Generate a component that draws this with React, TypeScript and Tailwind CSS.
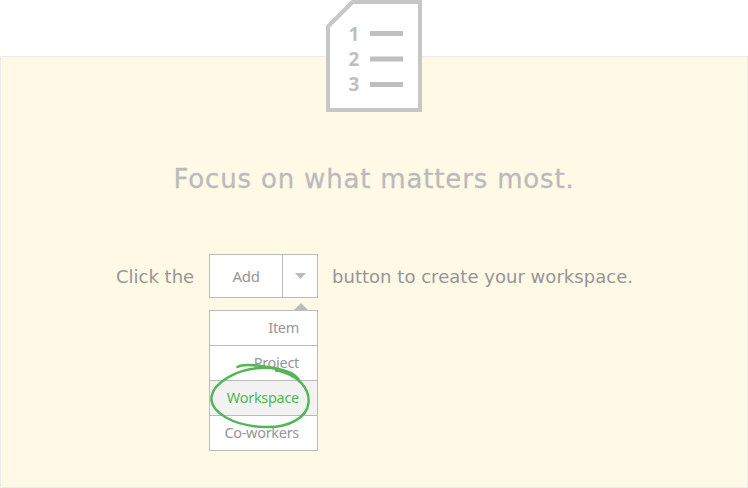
const menuItems = ["Item", "Project", "Workspace", "Co-workers"];

function ListIcon() {
  return (
    <svg width="96" height="112" viewBox="0 0 96 112" className="relative -mt-[57px] block shrink-0">
      <path d="M2 26.5 L26.5 2 H94 V110 H2 Z" fill="#ffffff" stroke="#c7c7c7" strokeWidth="4" />
      <g fill="#bfbfbf">
        <rect x="44" y="31" width="33" height="5" />
        <rect x="44" y="56.5" width="33" height="5" />
        <rect x="44" y="82" width="33" height="5" />
      </g>
      <g className="font-['Open_Sans',sans-serif] text-[19px] font-bold" fill="#bfbfbf">
        <text x="22.5" y="40.5">1</text>
        <text x="22.5" y="65.5">2</text>
        <text x="22.5" y="91">3</text>
      </g>
    </svg>
  );
}

function HandDrawnCircle() {
  return (
    <svg
      width="110"
      height="80"
      viewBox="205 355 110 80"
      className="pointer-events-none absolute -left-[4px] top-[101px]"
      fill="none"
      stroke="#53b655"
      strokeLinecap="round"
    >
      <path d="M237.5 367 C241 364.5 250 364.5 261 366 C277 368 297 372 299 381" strokeWidth="2.6" />
      <path
        d="M292 373.5 C282 369 270 367.5 260 368 C237 369 213 383 211.5 397 C210 412 233 426 264 427 C290 428 307 417 308.5 403 C310 389 299 375 276 370"
        strokeWidth="2.4"
      />
    </svg>
  );
}

export default function App() {
  return (
    <div className="flex h-[488px] w-[748px] flex-col bg-white pt-14 font-['DejaVu_Sans',Verdana,sans-serif]">
      <main className="flex h-[432px] flex-col items-center border border-[#ececec] bg-[#fff9e6]">
        <ListIcon />
        <h1 className="mt-[48px] whitespace-nowrap text-[26px] leading-[38px] tracking-[0.83px] text-[#bbbbbb] [-webkit-text-stroke:0.3px_#bbbbbb]">
          Focus on what matters most.
        </h1>
        <div className="mt-[56px] flex w-full items-start pl-[115px] text-[18px] leading-[46px] text-[#969696]">
          <span className="w-[93px] shrink-0 whitespace-nowrap">Click the</span>
          <div className="relative w-[109px] shrink-0 font-['Noto_Sans',Tahoma,sans-serif] text-[14.5px] tracking-[-0.3px]">
            <div className="flex h-[44px] border border-[#bbbbbb] bg-white">
              <span className="w-[73px] border-r border-[#bbbbbb] text-center text-[15px] leading-[43px]">Add</span>
              <span className="flex flex-1 items-center justify-center">
                <svg width="11" height="6" viewBox="0 0 11 6">
                  <path d="M0 0 H11 L5.5 6 Z" fill="#bbbbbb" />
                </svg>
              </span>
            </div>
            <svg width="14" height="7" viewBox="0 0 14 7" className="ml-[85px] mt-[5px] block">
              <path d="M0 7 L7 0 L14 7 Z" fill="#bbbbbb" />
            </svg>
            <ul className="border border-b-0 border-[#bbbbbb] bg-white text-right leading-[32px]">
              {menuItems.map((item) => (
                <li
                  key={item}
                  className={`h-[35px] border-b border-[#bbbbbb] pr-[18px] ${
                    item === "Workspace" ? "bg-[#f2f2f2] text-[#53b655]" : ""
                  }`}
                >
                  {item}
                </li>
              ))}
            </ul>
            <HandDrawnCircle />
          </div>
          <span className="ml-[14px] whitespace-nowrap tracking-[0.03px]">button to create your workspace.</span>
        </div>
      </main>
    </div>
  );
}
